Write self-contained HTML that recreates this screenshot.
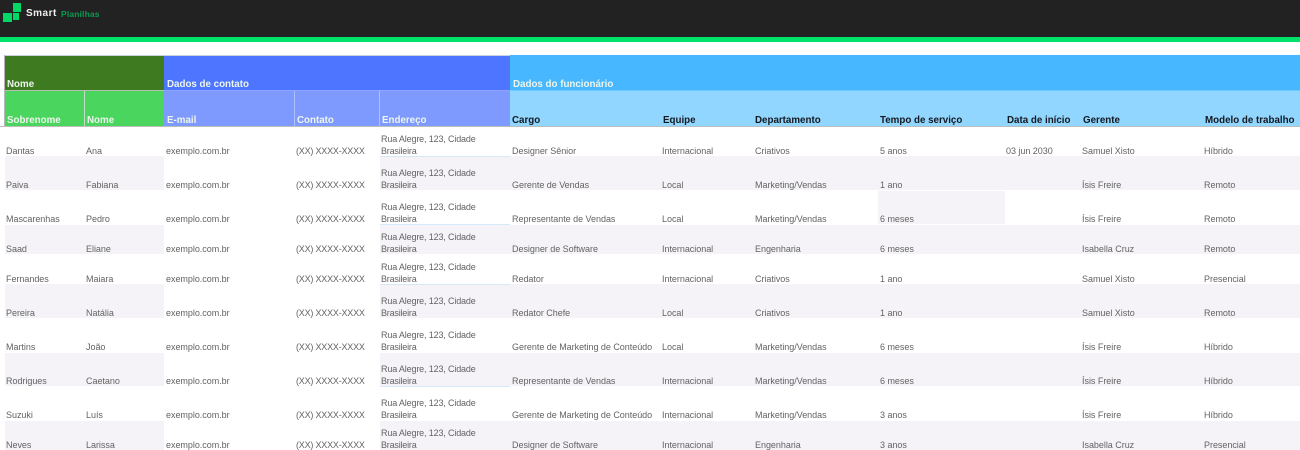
<!DOCTYPE html>
<html lang="pt-BR"><head><meta charset="utf-8"><title>Smart Planilhas</title>
<style>
html,body{margin:0;padding:0;background:#fff}
#p{position:relative;width:1300px;height:450px;overflow:hidden;background:#fff;font-family:"Liberation Sans",sans-serif}
#p div{position:absolute}
.t{position:absolute;white-space:nowrap;font-size:9px;line-height:12px;color:#636363;letter-spacing:-.03px;margin-top:1px;filter:blur(.3px)}
.a{letter-spacing:-.15px;margin-top:0}
.b{letter-spacing:-.2px}
.c{letter-spacing:-.2px}
.h{position:absolute;white-space:nowrap;font-size:10.5px;line-height:12px;font-weight:bold;letter-spacing:0;color:#eef5ee;transform:scaleX(.93);transform-origin:0 0;filter:blur(.3px)}
.k{color:#14181f}
.s{background:#f5f3f7}
.u{background:#d6ebfa;height:1px;left:380px;width:130px}
</style></head><body><div id="p">
<div style="left:0;top:0;width:1300px;height:37px;background:#222"></div>
<div style="left:0;top:37px;width:1300px;height:4.5px;background:#00e36a"></div>
<div style="left:13px;top:3px;width:8px;height:9px;background:#00d966"></div>
<div style="left:13px;top:13px;width:6px;height:7px;background:#00d966"></div>
<div style="left:3px;top:13px;width:9px;height:9px;background:#00d966"></div>
<span class="h" style="left:26px;top:8px;font-size:10px;color:#f0f0f0;letter-spacing:.5px;transform:none">Smart</span>
<span class="h" style="left:61px;top:8px;font-size:8.5px;color:#0b9a50;letter-spacing:.15px;transform:none">Planilhas</span>

<div style="left:4px;top:55px;width:1296px;height:1px;background:#c9d2dc"></div>
<div style="left:4px;top:55px;width:1px;height:72px;background:#b5b5b5"></div>
<div style="left:5px;top:56px;width:159px;height:34px;background:#3d7a20"></div>
<div style="left:164px;top:56px;width:346px;height:34px;background:#4d75ff"></div>
<div style="left:510px;top:55px;width:790px;height:35px;background:#47b8ff"></div>
<div style="left:5px;top:90px;width:159px;height:1px;background:#b5c0b0"></div>
<div style="left:164px;top:90px;width:346px;height:1px;background:#8ea5ff"></div>
<div style="left:510px;top:90px;width:790px;height:1px;background:#6cc8ff"></div>
<div style="left:5px;top:91px;width:159px;height:35px;background:#4ad65e"></div>
<div style="left:164px;top:91px;width:346px;height:35px;background:#7f9aff"></div>
<div style="left:510px;top:91px;width:790px;height:35px;background:#91d6ff"></div>
<div style="left:84px;top:91px;width:1px;height:35px;background:#c4dcc6"></div>
<div style="left:294px;top:91px;width:1px;height:35px;background:#afc0ff"></div>
<div style="left:379px;top:91px;width:1px;height:35px;background:#afc0ff"></div>
<div style="left:0;top:126px;width:1300px;height:1px;background:#bdbdbd"></div>

<span class="h" style="left:7px;top:78px">Nome</span>
<span class="h" style="left:167px;top:78px">Dados de contato</span>
<span class="h" style="left:513px;top:78px">Dados do funcionário</span>
<span class="h" style="left:7px;top:114px">Sobrenome</span>
<span class="h" style="left:87px;top:114px">Nome</span>
<span class="h" style="left:167px;top:114px">E-mail</span>
<span class="h" style="left:297px;top:114px">Contato</span>
<span class="h" style="left:382px;top:114px">Endereço</span>
<span class="h k" style="left:512px;top:114px">Cargo</span>
<span class="h k" style="left:663px;top:114px">Equipe</span>
<span class="h k" style="left:755px;top:114px">Departamento</span>
<span class="h k" style="left:880px;top:114px">Tempo de serviço</span>
<span class="h k" style="left:1007px;top:114px">Data de início</span>
<span class="h k" style="left:1083px;top:114px">Gerente</span>
<span class="h k" style="left:1205px;top:114px">Modelo de trabalho</span>

<!-- bands -->
<div class="s" style="left:5px;top:156px;width:159px;height:34px"></div>
<div class="s" style="left:380px;top:156px;width:920px;height:34px"></div>
<div class="s" style="left:878px;top:191px;width:127px;height:33px"></div>
<div class="s" style="left:5px;top:225px;width:159px;height:29px"></div>
<div class="s" style="left:380px;top:225px;width:920px;height:29px"></div>
<div class="s" style="left:5px;top:284px;width:159px;height:34px"></div>
<div class="s" style="left:380px;top:284px;width:920px;height:34px"></div>
<div class="s" style="left:5px;top:353px;width:159px;height:33px"></div>
<div class="s" style="left:380px;top:353px;width:920px;height:33px"></div>
<div class="s" style="left:5px;top:421px;width:159px;height:29px"></div>
<div class="s" style="left:380px;top:421px;width:920px;height:29px"></div>
<div class="u" style="top:156px"></div>
<div class="u" style="top:224px"></div>
<div class="u" style="top:284px"></div>
<div class="u" style="top:386px"></div>

<!-- row 1 -->
<span class="t" style="left:6px;top:144px">Dantas</span><span class="t" style="left:86px;top:144px">Ana</span><span class="t" style="left:166px;top:144px">exemplo.com.br</span><span class="t c" style="left:296px;top:144px">(XX) XXXX-XXXX</span><span class="t a" style="left:381px;top:133px">Rua Alegre, 123, Cidade</span><span class="t b" style="left:381px;top:144px">Brasileira</span><span class="t" style="left:512px;top:144px">Designer Sênior</span><span class="t" style="left:662px;top:144px">Internacional</span><span class="t" style="left:755px;top:144px">Criativos</span><span class="t" style="left:880px;top:144px">5 anos</span><span class="t" style="left:1006px;top:144px">03 jun 2030</span><span class="t" style="left:1082px;top:144px">Samuel Xisto</span><span class="t" style="left:1204px;top:144px">Híbrido</span>
<!-- row 2 -->
<span class="t" style="left:6px;top:178px">Paiva</span><span class="t" style="left:86px;top:178px">Fabiana</span><span class="t" style="left:166px;top:178px">exemplo.com.br</span><span class="t c" style="left:296px;top:178px">(XX) XXXX-XXXX</span><span class="t a" style="left:381px;top:167px">Rua Alegre, 123, Cidade</span><span class="t b" style="left:381px;top:178px">Brasileira</span><span class="t" style="left:512px;top:178px">Gerente de Vendas</span><span class="t" style="left:662px;top:178px">Local</span><span class="t" style="left:755px;top:178px">Marketing/Vendas</span><span class="t" style="left:880px;top:178px">1 ano</span><span class="t" style="left:1082px;top:178px">Ísis Freire</span><span class="t" style="left:1204px;top:178px">Remoto</span>
<!-- row 3 -->
<span class="t" style="left:6px;top:212px">Mascarenhas</span><span class="t" style="left:86px;top:212px">Pedro</span><span class="t" style="left:166px;top:212px">exemplo.com.br</span><span class="t c" style="left:296px;top:212px">(XX) XXXX-XXXX</span><span class="t a" style="left:381px;top:201px">Rua Alegre, 123, Cidade</span><span class="t b" style="left:381px;top:212px">Brasileira</span><span class="t" style="left:512px;top:212px">Representante de Vendas</span><span class="t" style="left:662px;top:212px">Local</span><span class="t" style="left:755px;top:212px">Marketing/Vendas</span><span class="t" style="left:880px;top:212px">6 meses</span><span class="t" style="left:1082px;top:212px">Ísis Freire</span><span class="t" style="left:1204px;top:212px">Remoto</span>
<!-- row 4 -->
<span class="t" style="left:6px;top:242px">Saad</span><span class="t" style="left:86px;top:242px">Eliane</span><span class="t" style="left:166px;top:242px">exemplo.com.br</span><span class="t c" style="left:296px;top:242px">(XX) XXXX-XXXX</span><span class="t a" style="left:381px;top:231px">Rua Alegre, 123, Cidade</span><span class="t b" style="left:381px;top:242px">Brasileira</span><span class="t" style="left:512px;top:242px">Designer de Software</span><span class="t" style="left:662px;top:242px">Internacional</span><span class="t" style="left:755px;top:242px">Engenharia</span><span class="t" style="left:880px;top:242px">6 meses</span><span class="t" style="left:1082px;top:242px">Isabella Cruz</span><span class="t" style="left:1204px;top:242px">Remoto</span>
<!-- row 5 -->
<span class="t" style="left:6px;top:272px">Fernandes</span><span class="t" style="left:86px;top:272px">Maiara</span><span class="t" style="left:166px;top:272px">exemplo.com.br</span><span class="t c" style="left:296px;top:272px">(XX) XXXX-XXXX</span><span class="t a" style="left:381px;top:261px">Rua Alegre, 123, Cidade</span><span class="t b" style="left:381px;top:272px">Brasileira</span><span class="t" style="left:512px;top:272px">Redator</span><span class="t" style="left:662px;top:272px">Internacional</span><span class="t" style="left:755px;top:272px">Criativos</span><span class="t" style="left:880px;top:272px">1 ano</span><span class="t" style="left:1082px;top:272px">Samuel Xisto</span><span class="t" style="left:1204px;top:272px">Presencial</span>
<!-- row 6 -->
<span class="t" style="left:6px;top:306px">Pereira</span><span class="t" style="left:86px;top:306px">Natália</span><span class="t" style="left:166px;top:306px">exemplo.com.br</span><span class="t c" style="left:296px;top:306px">(XX) XXXX-XXXX</span><span class="t a" style="left:381px;top:295px">Rua Alegre, 123, Cidade</span><span class="t b" style="left:381px;top:306px">Brasileira</span><span class="t" style="left:512px;top:306px">Redator Chefe</span><span class="t" style="left:662px;top:306px">Local</span><span class="t" style="left:755px;top:306px">Criativos</span><span class="t" style="left:880px;top:306px">1 ano</span><span class="t" style="left:1082px;top:306px">Samuel Xisto</span><span class="t" style="left:1204px;top:306px">Remoto</span>
<!-- row 7 -->
<span class="t" style="left:6px;top:340px">Martins</span><span class="t" style="left:86px;top:340px">João</span><span class="t" style="left:166px;top:340px">exemplo.com.br</span><span class="t c" style="left:296px;top:340px">(XX) XXXX-XXXX</span><span class="t a" style="left:381px;top:329px">Rua Alegre, 123, Cidade</span><span class="t b" style="left:381px;top:340px">Brasileira</span><span class="t" style="left:512px;top:340px">Gerente de Marketing de Conteúdo</span><span class="t" style="left:662px;top:340px">Local</span><span class="t" style="left:755px;top:340px">Marketing/Vendas</span><span class="t" style="left:880px;top:340px">6 meses</span><span class="t" style="left:1082px;top:340px">Ísis Freire</span><span class="t" style="left:1204px;top:340px">Híbrido</span>
<!-- row 8 -->
<span class="t" style="left:6px;top:374px">Rodrigues</span><span class="t" style="left:86px;top:374px">Caetano</span><span class="t" style="left:166px;top:374px">exemplo.com.br</span><span class="t c" style="left:296px;top:374px">(XX) XXXX-XXXX</span><span class="t a" style="left:381px;top:363px">Rua Alegre, 123, Cidade</span><span class="t b" style="left:381px;top:374px">Brasileira</span><span class="t" style="left:512px;top:374px">Representante de Vendas</span><span class="t" style="left:662px;top:374px">Internacional</span><span class="t" style="left:755px;top:374px">Marketing/Vendas</span><span class="t" style="left:880px;top:374px">6 meses</span><span class="t" style="left:1082px;top:374px">Ísis Freire</span><span class="t" style="left:1204px;top:374px">Híbrido</span>
<!-- row 9 -->
<span class="t" style="left:6px;top:408px">Suzuki</span><span class="t" style="left:86px;top:408px">Luís</span><span class="t" style="left:166px;top:408px">exemplo.com.br</span><span class="t c" style="left:296px;top:408px">(XX) XXXX-XXXX</span><span class="t a" style="left:381px;top:397px">Rua Alegre, 123, Cidade</span><span class="t b" style="left:381px;top:408px">Brasileira</span><span class="t" style="left:512px;top:408px">Gerente de Marketing de Conteúdo</span><span class="t" style="left:662px;top:408px">Internacional</span><span class="t" style="left:755px;top:408px">Marketing/Vendas</span><span class="t" style="left:880px;top:408px">3 anos</span><span class="t" style="left:1082px;top:408px">Ísis Freire</span><span class="t" style="left:1204px;top:408px">Híbrido</span>
<!-- row 10 -->
<span class="t" style="left:6px;top:438px">Neves</span><span class="t" style="left:86px;top:438px">Larissa</span><span class="t" style="left:166px;top:438px">exemplo.com.br</span><span class="t c" style="left:296px;top:438px">(XX) XXXX-XXXX</span><span class="t a" style="left:381px;top:427px">Rua Alegre, 123, Cidade</span><span class="t b" style="left:381px;top:438px">Brasileira</span><span class="t" style="left:512px;top:438px">Designer de Software</span><span class="t" style="left:662px;top:438px">Internacional</span><span class="t" style="left:755px;top:438px">Engenharia</span><span class="t" style="left:880px;top:438px">3 anos</span><span class="t" style="left:1082px;top:438px">Isabella Cruz</span><span class="t" style="left:1204px;top:438px">Presencial</span>
</div></body></html>
